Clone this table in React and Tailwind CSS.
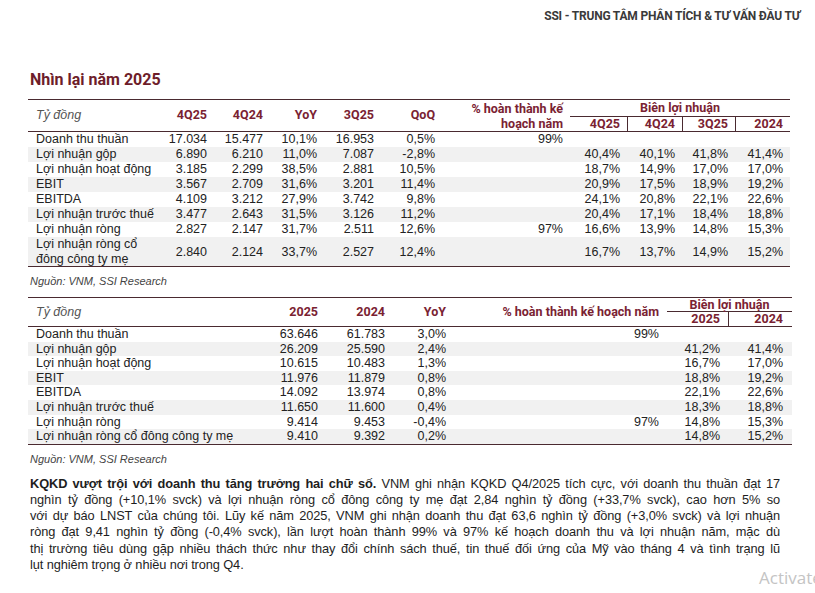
const red = "text-[#7a2232]";

const q = [
  ["Doanh thu thuần", "17.034", "15.477", "10,1%", "16.953", "0,5%", "99%", "", "", "", ""],
  ["Lợi nhuận gộp", "6.890", "6.210", "11,0%", "7.087", "-2,8%", "", "40,4%", "40,1%", "41,8%", "41,4%"],
  ["Lợi nhuận hoạt động", "3.185", "2.299", "38,5%", "2.881", "10,5%", "", "18,7%", "14,9%", "17,0%", "17,0%"],
  ["EBIT", "3.567", "2.709", "31,6%", "3.201", "11,4%", "", "20,9%", "17,5%", "18,9%", "19,2%"],
  ["EBITDA", "4.109", "3.212", "27,9%", "3.742", "9,8%", "", "24,1%", "20,8%", "22,1%", "22,6%"],
  ["Lợi nhuận trước thuế", "3.477", "2.643", "31,5%", "3.126", "11,2%", "", "20,4%", "17,1%", "18,4%", "18,8%"],
  ["Lợi nhuận ròng", "2.827", "2.147", "31,7%", "2.511", "12,6%", "97%", "16,6%", "13,9%", "14,8%", "15,3%"],
  [<>Lợi nhuận ròng cổ<br />đông công ty mẹ</>, "2.840", "2.124", "33,7%", "2.527", "12,4%", "", "16,7%", "13,7%", "14,9%", "15,2%"],
];

const y = [
  ["Doanh thu thuần", "63.646", "61.783", "3,0%", "99%", "", ""],
  ["Lợi nhuận gộp", "26.209", "25.590", "2,4%", "", "41,2%", "41,4%"],
  ["Lợi nhuận hoạt động", "10.615", "10.483", "1,3%", "", "16,7%", "17,0%"],
  ["EBIT", "11.976", "11.879", "0,8%", "", "18,8%", "19,2%"],
  ["EBITDA", "14.092", "13.974", "0,8%", "", "22,1%", "22,6%"],
  ["Lợi nhuận trước thuế", "11.650", "11.600", "0,4%", "", "18,3%", "18,8%"],
  ["Lợi nhuận ròng", "9.414", "9.453", "-0,4%", "97%", "14,8%", "15,3%"],
  ["Lợi nhuận ròng cổ đông công ty mẹ", "9.410", "9.392", "0,2%", "", "14,8%", "15,2%"],
];

const cols1 = "grid grid-cols-[122px_57px_56px_54px_57px_61px_135px_57px_55px_53px_55px]";
const pad1 = ["pl-2", "", "", "", "", "", "pr-[7px]", "pr-[7px]", "pr-[7px]", "pr-[7px]", "pr-[7px]"];
const cols2 = "grid grid-cols-[232px_58px_67px_61px_221px_61px_64px]";
const pad2 = ["pl-2", "", "", "", "pr-[8px]", "pr-[8px]", "pr-[9px]"];

function Row({ cells, cols, pad, h, gray }) {
  return (
    <div className={`${cols} ${h} ${gray ? "bg-[#f1f1f1]" : ""}`}>
      {cells.map((c, i) => (
        <div
          key={i}
          className={`flex items-center ${i === 0 ? "justify-start" : "justify-end"} ${pad[i]} whitespace-nowrap leading-[15px]`}
        >
          {c}
        </div>
      ))}
    </div>
  );
}

const line = "whitespace-nowrap text-justify [text-align-last:justify]";

export default function App() {
  return (
    <div className="relative w-[815px] h-[593px] overflow-hidden bg-white font-['Liberation_Sans',Arial,sans-serif] text-[#222]">
      <div className="h-[32px] flex items-center justify-end pr-[15px] font-['Roboto',sans-serif] font-bold text-[12px] text-[#3a3a3a] tracking-[-0.2px]">
        SSI - TRUNG TÂM PHÂN TÍCH &amp; TƯ VẤN ĐẦU TƯ
      </div>

      <div className="px-[28px]">
        <h1 className={`mt-[38px] mb-[9px] h-[20px] leading-[20px] pl-[2px] font-['Roboto',sans-serif] font-bold text-[16px] text-[#6e1d2a]`}>
          Nhìn lại năm 2025
        </h1>

        {/* quarterly table */}
        <div className="w-[762px] border-t border-b border-[#4a2a30] text-[12.5px]">
          <div className={`${cols1} grid-rows-[17px_14px] border-b border-[#4a2a30] font-['Roboto',sans-serif] font-bold ${red}`}>
            <div className="row-span-2 flex items-center pl-2 italic font-normal font-['Liberation_Sans',sans-serif] text-[#555]">Tỷ đồng</div>
            {["4Q25", "4Q24", "YoY", "3Q25", "QoQ"].map((t) => (
              <div key={t} className="row-span-2 flex items-center justify-end">{t}</div>
            ))}
            <div className="row-span-2 flex flex-col justify-center items-end pr-[7px] leading-[15px] text-right">
              <span>% hoàn thành kế</span>
              <span>hoạch năm</span>
            </div>
            <div className="col-span-4 flex items-center justify-center border-b border-[#4a2a30]">Biên lợi nhuận</div>
            <div className="flex items-center justify-end pr-[7px]">4Q25</div>
            <div className="flex items-center justify-end pr-[7px] border-l border-[#4a2a30]">4Q24</div>
            <div className="flex items-center justify-end pr-[7px] border-l border-[#4a2a30]">3Q25</div>
            <div className="flex items-center justify-end pr-[7px] border-l border-[#4a2a30]">2024</div>
          </div>
          {q.map((r, i) => (
            <Row key={i} cells={r} cols={cols1} pad={pad1} h={i === 7 ? "h-[29px]" : "h-[15px]"} gray={i % 2 === 1} />
          ))}
        </div>

        <p className="mt-[6px] h-[16px] leading-[16px] pl-[2px] italic text-[11px] text-[#444]">Nguồn: VNM, SSI Research</p>

        {/* yearly table */}
        <div className="mt-[8px] w-[764px] border-t border-b border-[#4a2a30] text-[12.5px]">
          <div className={`${cols2} grid-rows-[14px_14px] border-b border-[#4a2a30] font-['Roboto',sans-serif] font-bold ${red}`}>
            <div className="row-span-2 flex items-center pl-2 italic font-normal font-['Liberation_Sans',sans-serif] text-[#555]">Tỷ đồng</div>
            {["2025", "2024", "YoY"].map((t) => (
              <div key={t} className="row-span-2 flex items-center justify-end">{t}</div>
            ))}
            <div className="row-span-2 flex items-center justify-end pr-[8px]">% hoàn thành kế hoạch năm</div>
            <div className="col-span-2 flex items-center justify-center border-b border-[#4a2a30] leading-[14px]">Biên lợi nhuận</div>
            <div className="flex items-center justify-end pr-[8px] leading-[14px]">2025</div>
            <div className="flex items-center justify-end pr-[9px] border-l border-[#4a2a30] leading-[14px]">2024</div>
          </div>
          {y.map((r, i) => (
            <Row key={i} cells={r} cols={cols2} pad={pad2} h="h-[14.6px]" gray={i % 2 === 1} />
          ))}
        </div>

        <p className="mt-[6px] h-[16px] leading-[16px] pl-[2px] italic text-[11px] text-[#444]">Nguồn: VNM, SSI Research</p>

        <div className="mt-[9px] w-[752px] pl-[2px] text-[12.8px] tracking-[-0.1px] leading-[16.2px] text-[#1e1e1e]">
          <p className={line}>
            <b>KQKD vượt trội với doanh thu tăng trưởng hai chữ số.</b> VNM ghi nhận KQKD Q4/2025 tích cực, với doanh thu thuần đạt 17
          </p>
          <p className={line}>
            nghìn tỷ đồng (+10,1% svck) và lợi nhuận ròng cổ đông công ty mẹ đạt 2,84 nghìn tỷ đồng (+33,7% svck), cao hơn 5% so
          </p>
          <p className={line}>
            với dự báo LNST của chúng tôi. Lũy kế năm 2025, VNM ghi nhận doanh thu đạt 63,6 nghìn tỷ đồng (+3,0% svck) và lợi nhuận
          </p>
          <p className={line}>
            ròng đạt 9,41 nghìn tỷ đồng (-0,4% svck), lần lượt hoàn thành 99% và 97% kế hoạch doanh thu và lợi nhuận năm, mặc dù
          </p>
          <p className={line}>
            thị trường tiêu dùng gặp nhiều thách thức như thay đổi chính sách thuế, tin thuế đối ứng của Mỹ vào tháng 4 và tình trạng lũ
          </p>
          <p className="whitespace-nowrap">lụt nghiêm trọng ở nhiều nơi trong Q4.</p>
        </div>
      </div>

      <div className="absolute left-[759px] top-[567px] whitespace-nowrap font-['Open_Sans',sans-serif] text-[17px] leading-[22px] text-[#c4c4c4]">
        Activate Windows
      </div>
    </div>
  );
}
